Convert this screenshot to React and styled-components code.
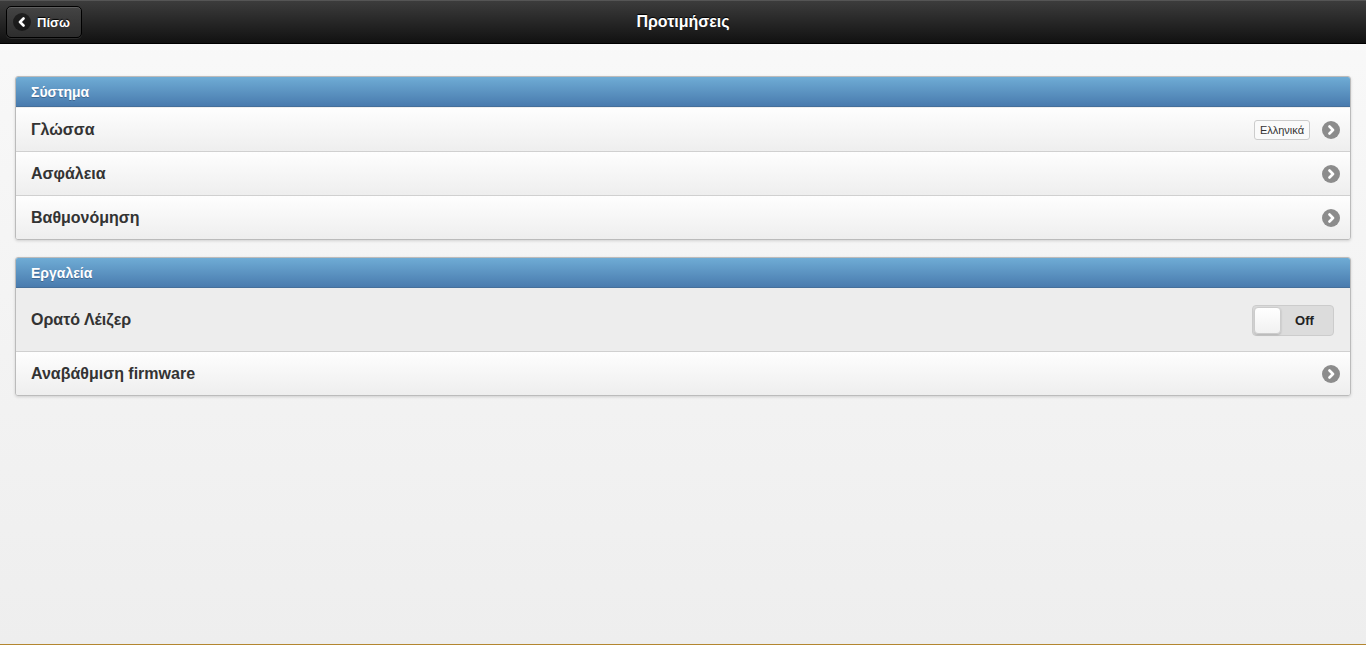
import React, { useState } from "react";
import styled, { createGlobalStyle } from "styled-components";

const Global = createGlobalStyle`
  html, body { margin: 0; padding: 0; height: 100%; }
  body { font-family: "Liberation Sans", Arial, sans-serif; }
  #root { height: 100%; }
`;

const Page = styled.div`
  display: flex;
  flex-direction: column;
  height: 100vh;
  background: linear-gradient(#f9f9f9, #eeeeee);
`;

const Header = styled.div`
  position: relative;
  height: 44px;
  box-sizing: border-box;
  border-top: 1px solid #555;
  border-bottom: 1px solid #000;
  background: linear-gradient(#3c3c3c, #111111);
  display: flex;
  align-items: center;
  justify-content: center;
`;

const Title = styled.h1`
  margin: 0;
  font-size: 16px;
  font-weight: bold;
  color: #fff;
  text-shadow: 0 -1px 1px #000;
`;

const BackButton = styled.button`
  position: absolute;
  left: 6px;
  top: 5px;
  height: 32px;
  width: 76px;
  box-sizing: border-box;
  display: flex;
  align-items: center;
  gap: 6px;
  padding: 0 0 0 6px;
  border: 1px solid #000;
  border-radius: 5px;
  background: linear-gradient(#444, #2d2d2d);
  box-shadow: inset 0 1px 0 rgba(255,255,255,0.15), 0 1px 0 rgba(255,255,255,0.1);
  color: #fff;
  font: bold 13px "Liberation Sans", Arial, sans-serif;
  text-shadow: 0 -1px 1px #000;
`;

const BackIcon = styled.span`
  width: 18px;
  height: 18px;
  border-radius: 50%;
  background: rgba(0,0,0,0.5);
  display: flex;
  align-items: center;
  justify-content: center;
`;

const Content = styled.div`
  flex: 1;
  padding: 32px 15px 0;
  display: flex;
  flex-direction: column;
  gap: 17px;
`;

const Group = styled.ul`
  list-style: none;
  margin: 0;
  padding: 0;
  border: 1px solid #bbb;
  border-radius: 3px;
  overflow: hidden;
  box-shadow: 0 1px 3px rgba(0,0,0,0.15);
`;

const Divider = styled.li`
  height: 30px;
  box-sizing: border-box;
  padding: 0 15px;
  display: flex;
  align-items: center;
  background: linear-gradient(#6facd5, #497bae);
  border-bottom: 1px solid #456f9a;
  color: #fff;
  font-size: 14px;
  font-weight: bold;
  text-shadow: 0 1px 0 #3e6790;
`;

const Item = styled.li`
  height: ${p => p.$tall ? 63 : 44}px;
  box-sizing: border-box;
  display: flex;
  align-items: center;
  gap: 12px;
  padding: 0 10px 0 15px;
  background: ${p => p.$flat ? "#ededed" : "linear-gradient(#fefefe, #eeeeee)"};
  border-top: 1px solid ${p => p.$first ? "transparent" : "#d0d0d0"};
  color: #333;
  font-size: 16px;
  font-weight: bold;
`;

const Label = styled.span`
  flex: 1;
`;

const Count = styled.span`
  font-size: 11px;
  font-weight: normal;
  color: #333;
  border: 1px solid #ccc;
  border-radius: 3px;
  background: #fafafa;
  padding: 3px 5px;
`;

const Arrow = styled.span`
  width: 18px;
  height: 18px;
  border-radius: 50%;
  background: #8c8c8c;
  display: flex;
  align-items: center;
  justify-content: center;
`;

const Toggle = styled.button`
  width: 82px;
  height: 31px;
  margin-right: 6px;
  box-sizing: border-box;
  border: 1px solid #ccc;
  border-radius: 4px;
  background: #dcdcdc;
  padding: 1px;
  display: flex;
  align-items: center;
  cursor: pointer;
  font: bold 13px "Liberation Sans", Arial, sans-serif;
  color: #222;
`;

const Knob = styled.span`
  width: 27px;
  height: 27px;
  box-sizing: border-box;
  border: 1px solid #ccc;
  border-radius: 4px;
  background: linear-gradient(#fff, #f1f1f1);
  box-shadow: 0 1px 2px rgba(0,0,0,0.2);
`;

const ToggleText = styled.span`
  flex: 1;
  text-align: center;
  padding-right: 4px;
`;

const Footer = styled.div`
  height: 1px;
  background: #b3862f;
`;

const Chevron = ({ left }) => (
  <svg width="10" height="10" viewBox="0 0 10 10">
    <path d={left ? "M6.5 1.5 L3 5 L6.5 8.5" : "M3.5 1.5 L7 5 L3.5 8.5"}
      fill="none" stroke="#fff" strokeWidth="2.6" strokeLinecap="round" strokeLinejoin="round" />
  </svg>
);

export default function App() {
  const [laser, setLaser] = useState(false);
  return (
    <Page>
      <Global />
      <Header>
        <BackButton>
          <BackIcon><Chevron left /></BackIcon>
          Πίσω
        </BackButton>
        <Title>Προτιμήσεις</Title>
      </Header>
      <Content>
        <Group>
          <Divider>Σύστημα</Divider>
          <Item $first>
            <Label>Γλώσσα</Label>
            <Count>Ελληνικά</Count>
            <Arrow><Chevron /></Arrow>
          </Item>
          <Item>
            <Label>Ασφάλεια</Label>
            <Arrow><Chevron /></Arrow>
          </Item>
          <Item>
            <Label>Βαθμονόμηση</Label>
            <Arrow><Chevron /></Arrow>
          </Item>
        </Group>
        <Group>
          <Divider>Εργαλεία</Divider>
          <Item $first $tall $flat>
            <Label>Ορατό Λέιζερ</Label>
            <Toggle onClick={() => setLaser(!laser)}>
              <Knob />
              <ToggleText>{laser ? "On" : "Off"}</ToggleText>
            </Toggle>
          </Item>
          <Item>
            <Label>Αναβάθμιση firmware</Label>
            <Arrow><Chevron /></Arrow>
          </Item>
        </Group>
      </Content>
      <Footer />
    </Page>
  );
}
